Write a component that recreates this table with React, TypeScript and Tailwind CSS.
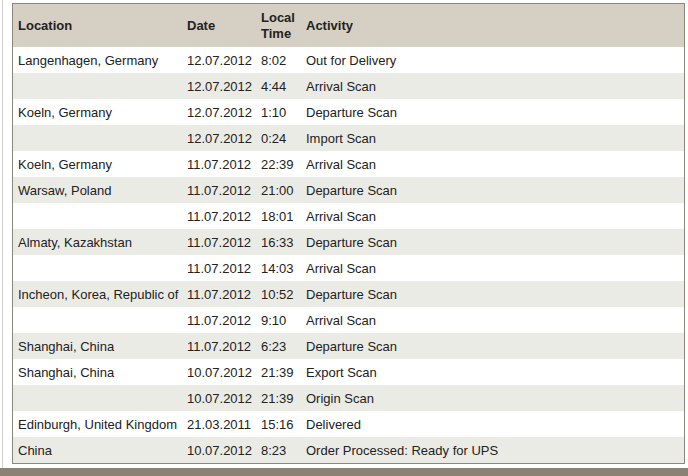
const rows = [
  ["Langenhagen, Germany", "12.07.2012", "8:02", "Out for Delivery"],
  ["", "12.07.2012", "4:44", "Arrival Scan"],
  ["Koeln, Germany", "12.07.2012", "1:10", "Departure Scan"],
  ["", "12.07.2012", "0:24", "Import Scan"],
  ["Koeln, Germany", "11.07.2012", "22:39", "Arrival Scan"],
  ["Warsaw, Poland", "11.07.2012", "21:00", "Departure Scan"],
  ["", "11.07.2012", "18:01", "Arrival Scan"],
  ["Almaty, Kazakhstan", "11.07.2012", "16:33", "Departure Scan"],
  ["", "11.07.2012", "14:03", "Arrival Scan"],
  ["Incheon, Korea, Republic of", "11.07.2012", "10:52", "Departure Scan"],
  ["", "11.07.2012", "9:10", "Arrival Scan"],
  ["Shanghai, China", "11.07.2012", "6:23", "Departure Scan"],
  ["Shanghai, China", "10.07.2012", "21:39", "Export Scan"],
  ["", "10.07.2012", "21:39", "Origin Scan"],
  ["Edinburgh, United Kingdom", "21.03.2011", "15:16", "Delivered"],
  ["China", "10.07.2012", "8:23", "Order Processed: Ready for UPS"],
]

export default function App() {
  return (
    <div className="flex h-[476px] w-[688px] flex-col bg-white font-['Liberation_Sans',Arial,sans-serif] text-[13px] text-[#222]">
      <div className="ml-[2px] flex-1 border-l border-[#cfcfcf] pl-[9px] pt-[3px]">
        <div className="w-[673px] border border-[#8b877d]">
          <div className="grid h-[43px] grid-cols-[168px_74px_45px_1fr] items-center bg-[#d6cfc4] pt-[1px] font-bold leading-[16px]">
            <div className="pl-[5px]">Location</div>
            <div className="pl-[6px]">Date</div>
            <div className="pl-[6px]">Local Time</div>
            <div className="pl-[6px]">Activity</div>
          </div>
          {rows.map((r, i) => (
            <div
              key={i}
              className={`grid h-[26px] grid-cols-[168px_74px_45px_1fr] items-center whitespace-nowrap pt-[2px] ${
                i % 2 === 1 ? "bg-[#ebebe6]" : "bg-white"
              }`}
            >
              <div className="pl-[5px]">{r[0]}</div>
              <div className="pl-[6px]">{r[1]}</div>
              <div className="pl-[6px]">{r[2]}</div>
              <div className="pl-[6px]">{r[3]}</div>
            </div>
          ))}
        </div>
      </div>
      <div className="h-[8px] bg-[#8a8273]" />
    </div>
  )
}
